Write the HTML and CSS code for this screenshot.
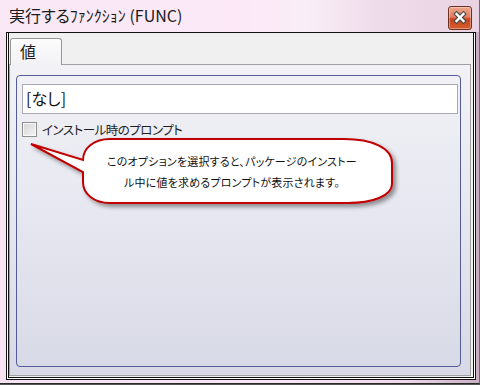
FILE: index.html
```html
<!DOCTYPE html>
<html>
<head>
  <title>実行するファンクション (FUNC)</title>
  <link rel="stylesheet" href="styles.css">
</head>
<body>
  <div class="window">
    <div class="titlebar">
      <span class="title">実行するﾌｧﾝｸｼｮﾝ (FUNC)</span>
      <div class="close">
        <svg width="22" height="22" viewBox="0 0 22 22">
          <path d="M7.5 7 L14.5 14 M14.5 7 L7.5 14" stroke="#4a4a4a" stroke-width="4.6" stroke-linecap="square" fill="none"/>
          <path d="M7.5 7 L14.5 14 M14.5 7 L7.5 14" stroke="#ffffff" stroke-width="2.4" stroke-linecap="square" fill="none"/>
        </svg>
      </div>
    </div>

    <div class="client">
      <div class="client-inner">
        <div class="tabs">
          <div class="tab">値</div>
        </div>
        <div class="tab-page">
          <div class="group">
            <div class="textbox">[なし]</div>
            <div class="check">
              <span class="box"></span>
              <span class="check-label">インストール時のプロンプト</span>
            </div>
          </div>
        </div>
      </div>
    </div>
    <div class="frame-bottom"></div>

    <!-- help balloon over the dialog -->
    <svg class="balloon" width="480" height="385" viewBox="0 0 480 385">
      <defs>
        <filter id="shadow" x="-10%" y="-30%" width="130%" height="170%">
          <feDropShadow dx="3" dy="3" stdDeviation="2" flood-color="#000" flood-opacity="0.4"/>
        </filter>
      </defs>
      <path d="M110 139 L344 139 C372 139 392 148 392 163 L392 184 C392 196 372 203 348 203 L110 203 C94 203 83 194 83 182 L83 172 L31 144 L83 160 C83 148 94 139 110 139 Z"
            fill="#ffffff" stroke="#c00000" stroke-width="2" filter="url(#shadow)"/>
    </svg>
    <div class="balloon-text">
      このオプションを選択すると、パッケージのインストー<br>ル中に値を求めるプロンプトが表示されます。
    </div>
  </div>
</body>
</html>
```

FILE: styles.css
```css
html, body {
  margin: 0;
  padding: 0;
}
body {
  background: #555;
  font-family: "Noto Sans CJK JP", "Noto Sans", sans-serif;
  font-feature-settings: "palt";
  color: #1e1e1e;
}
.window {
  position: relative;
  width: 480px;
  height: 384px;
  box-sizing: border-box;
  border-right: 1px solid #6a6a6a;
  border-bottom: 1px solid #2a2a2a;
  background: linear-gradient(90deg, #f6e2f1 0%, #f8e6f4 60%, #eed8e8 85%, #c9afc2 100%);
  display: flex;
  flex-direction: column;
  overflow: hidden;
}
.titlebar {
  height: 32px;
  display: flex;
  align-items: flex-start;
  justify-content: space-between;
  background: linear-gradient(90deg, #fae8f6 0%, #fce8f7 50%, #f9eef7 64%, #efdcea 78%, #e9d3e3 100%);
}
.title {
  padding: 4px 0 0 9px;
  font-size: 16px;
  line-height: 22px;
  color: #1a1a1a;
}
.close {
  margin: 6px 7px 0 0;
  width: 22px;
  height: 22px;
  border: 1px solid #6b3022;
  border-radius: 3px;
  background: linear-gradient(#eba88f 0%, #e17e5f 45%, #c9421c 55%, #d4602f 100%);
  box-shadow: inset 0 0 0 1px rgba(255, 255, 255, 0.35);
}
.close svg {
  display: block;
}
.client {
  height: 348px;
  margin: 0 3px 0 6px;
  box-sizing: border-box;
  border: 1px solid #111;
  padding: 0 1px 1px 1px;
  background: #fff;
  display: flex;
}
.client-inner {
  flex: 1;
  border: 1px solid #111;
  border-top: none;
  background: #f0f0f0;
  display: flex;
  flex-direction: column;
  padding: 5px 2px 1px 0;
}
.frame-bottom {
  height: 3px;
}
.tabs {
  display: flex;
}
.tab {
  position: relative;
  z-index: 1;
  margin: 0 0 -1px 1px;
  width: 52px;
  height: 27px;
  box-sizing: border-box;
  border: 1px solid #979797;
  border-bottom: none;
  border-radius: 3px 3px 0 0;
  background: linear-gradient(#fcfcfc, #f2f2f6);
  font-size: 16px;
  line-height: 24px;
  padding-left: 9px;
}
.tab-page {
  flex: 1;
  border: 1px solid #a0a0a0;
  background: linear-gradient(#f2f2f6 0%, #e8e9f1 40%, #d7d9e6 100%);
  padding: 10px 9px 8px 6px;
  display: flex;
}
.group {
  flex: 1;
  border: 1px solid #545b97;
  border-radius: 4px;
  padding: 8px 2px 0 5px;
}
.textbox {
  height: 30px;
  box-sizing: border-box;
  border: 1px solid #a9a9b4;
  background: #fff;
  font-size: 16px;
  line-height: 27px;
  padding-left: 3px;
  color: #111;
}
.check {
  display: flex;
  align-items: center;
  margin-top: 7px;
  height: 16px;
}
.box {
  width: 13px;
  height: 13px;
  border: 1px solid #8e8f8f;
  background: linear-gradient(135deg, #d4d4d4, #f4f4f4);
  box-shadow: inset 0 0 0 1px #f8f8f8;
}
.check-label {
  margin-left: 5px;
  font-size: 12.5px;
  letter-spacing: -0.5px;
  color: #1e1e1e;
}
.balloon {
  position: absolute;
  left: 0;
  top: 0;
}
.balloon-text {
  position: absolute;
  left: 77px;
  top: 151px;
  width: 310px;
  text-align: center;
  font-size: 11px;
  letter-spacing: 0.2px;
  line-height: 21px;
  color: #111;
}
```
